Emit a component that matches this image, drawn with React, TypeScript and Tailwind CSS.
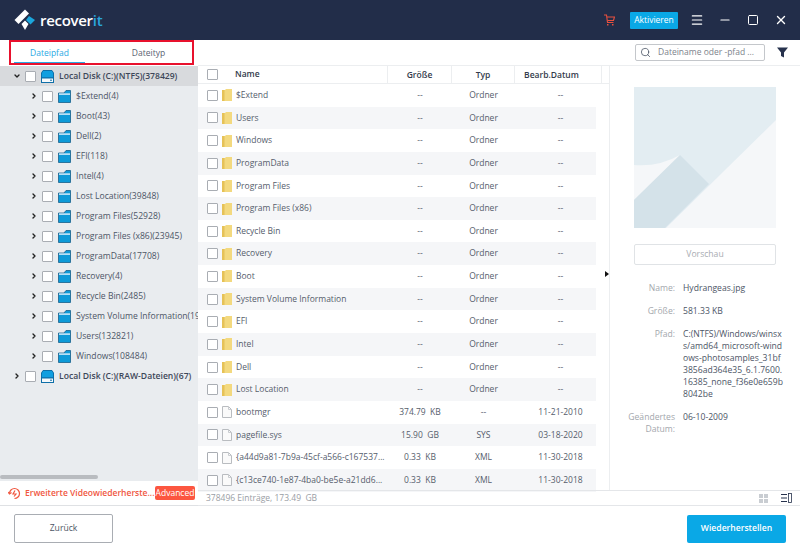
import { ChevronRight, ChevronDown, Search, Menu, Minus, Square, X } from "lucide-react";

const font = "font-['Open_Sans','Noto_Sans',sans-serif]";

const treeItems = [
  "$Extend(4)",
  "Boot(43)",
  "Dell(2)",
  "EFI(118)",
  "Intel(4)",
  "Lost Location(39848)",
  "Program Files(52928)",
  "Program Files (x86)(23945)",
  "ProgramData(17708)",
  "Recovery(4)",
  "Recycle Bin(2485)",
  "System Volume Information(19",
  "Users(132821)",
  "Windows(108484)",
];

const folders = [
  "$Extend",
  "Users",
  "Windows",
  "ProgramData",
  "Program Files",
  "Program Files (x86)",
  "Recycle Bin",
  "Recovery",
  "Boot",
  "System Volume Information",
  "EFI",
  "Intel",
  "Dell",
  "Lost Location",
];

const files = [
  { name: "bootmgr", size: "374.79  KB", type: "--", date: "11-21-2010" },
  { name: "pagefile.sys", size: "15.90  GB", type: "SYS", date: "03-18-2020" },
  { name: "{a44d9a81-7b9a-45cf-a566-c167537...", size: "0.33  KB", type: "XML", date: "11-30-2018" },
  { name: "{c13ce740-1e87-4ba0-be5e-a21dd6...", size: "0.33  KB", type: "XML", date: "11-30-2018" },
];

const pathLines = [
  "C:(NTFS)/Windows/winsx",
  "s/amd64_microsoft-wind",
  "ows-photosamples_31bf",
  "3856ad364e35_6.1.7600.",
  "16385_none_f36e0e659b",
  "8042be",
];

function Box({ className = "" }: { className?: string }) {
  return <span className={`block w-[11px] h-[11px] shrink-0 border border-[#a9adb3] bg-white rounded-[1px] ${className}`} />;
}

function Logo() {
  return (
    <svg width="22" height="22" viewBox="0 0 22 22">
      <path d="M11 0.5 L15 4.5 L4.5 15 L0.5 11 Z" fill="#fff" />
      <path d="M7.5 15 L11 11.5 L14.5 15 L11 21 Z" fill="#fff" />
      <path d="M15 7 L21 11 L16.5 15.5 L12 11 Z" fill="#1ba6dc" />
    </svg>
  );
}

function Cart() {
  return (
    <svg width="11" height="12" viewBox="0 0 11 12" fill="none" stroke="#e8503f" strokeWidth="1.1">
      <path d="M0 1 H2.5 L3.5 8.5 H9.5" />
      <path d="M3 3 H10.5 L9.5 6.5 H3.5" />
      <rect x="3" y="10" width="1.5" height="1.5" fill="#e8503f" stroke="none" />
      <rect x="8" y="10" width="1.5" height="1.5" fill="#e8503f" stroke="none" />
    </svg>
  );
}

function Disk() {
  return (
    <svg width="13" height="13" viewBox="0 0 13 13" className="shrink-0">
      <path d="M2 0.5 H11 L12.5 3 V8 H0.5 V3 Z" fill="#119fe0" stroke="#0f6fa8" />
      <rect x="0.5" y="8" width="12" height="4.5" fill="#f4f8fb" stroke="#0f6fa8" />
      <rect x="9" y="9.7" width="2" height="1" fill="#0f6fa8" />
    </svg>
  );
}

function BlueFolder() {
  return (
    <svg width="13" height="13" viewBox="0 0 13 13" className="shrink-0">
      <path d="M0.5 3 H6 L8 0.5 H12.5 V12.5 H0.5 Z" fill="#0c9ad8" stroke="#16608c" strokeWidth="0.8" />
      <rect x="1" y="3.4" width="11" height="1.4" fill="#dff1fa" />
    </svg>
  );
}

function YellowFolder() {
  return (
    <svg width="10" height="12" viewBox="0 0 10 12" className="shrink-0">
      <path d="M0 1 H3 L4 0 H10 V12 H0 Z" fill="#f3d97f" />
      <rect x="0" y="1" width="2.5" height="11" fill="#e6c257" />
    </svg>
  );
}

function FileIcon() {
  return (
    <svg width="10" height="12" viewBox="0 0 10 12" className="shrink-0">
      <path d="M0.5 0.5 H6.5 L9.5 3.5 V11.5 H0.5 Z" fill="#fafafa" stroke="#b9bcc0" />
      <path d="M6.5 0.5 V3.5 H9.5" fill="none" stroke="#c9ccd0" />
    </svg>
  );
}

function TreeRow({ label }: { label: string }) {
  return (
    <div className="h-5 flex items-center pl-[30px] text-[8.6px] text-[#4c5566] overflow-hidden">
      <ChevronRight size={8} strokeWidth={4} className="text-[#222] shrink-0" />
      <Box className="ml-[4px]" />
      <span className="ml-[5px]"><BlueFolder /></span>
      <span className="ml-[5px] whitespace-nowrap">{label}</span>
    </div>
  );
}

function Row({ name, size, type, date, odd, file }: { name: string; size: string; type: string; date: string; odd: boolean; file?: boolean }) {
  return (
    <div className={`h-[22.65px] flex items-center text-[8.5px] text-[#555d6c] ${odd ? "bg-[#f5f6f8]" : "bg-white"}`}>
      <div className="w-[190px] flex items-center pl-[9px] shrink-0">
        <Box />
        <span className="ml-[4px]">{file ? <FileIcon /> : <YellowFolder />}</span>
        <span className="ml-[4px] whitespace-nowrap">{name}</span>
      </div>
      <div className="w-[64px] text-center whitespace-pre">{size}</div>
      <div className="w-[63px] text-center">{type}</div>
      <div className="w-[81px] text-center pl-[10px]">{date}</div>
    </div>
  );
}

function Info({ label, children }: { label: React.ReactNode; children: React.ReactNode }) {
  return (
    <div className="flex text-[8.6px] leading-[12px] mb-[11px]">
      <div className="w-[53px] text-right text-[#a3a7ad] shrink-0">{label}</div>
      <div className="ml-[8px] text-[#4c5566] whitespace-nowrap">{children}</div>
    </div>
  );
}

export default function App() {
  return (
    <div className={`w-[800px] h-[550px] flex flex-col bg-white overflow-hidden ${font}`}>
      {/* title bar */}
      <div className="h-10 shrink-0 bg-[#222d49] flex items-center pl-[14px]">
        <Logo />
        <span className="ml-[4px] text-white text-[15px] font-semibold tracking-[-0.3px]">
          recover<span className="text-[#2aa5dc]">it</span>
        </span>
        <div className="ml-auto flex items-center">
          <Cart />
          <button className="ml-[15px] w-[48px] h-[17px] bg-[#0aa8e6] rounded-[1px] text-white text-[8.5px]">Aktivieren</button>
          <Menu size={14} strokeWidth={2} className="ml-[12px] text-white" />
          <Minus size={14} strokeWidth={2} className="ml-[14px] text-white" />
          <Square size={12} strokeWidth={2} className="ml-[15px] text-white" />
          <X size={14} strokeWidth={2.4} className="ml-[15px] mr-[12px] text-white" />
        </div>
      </div>

      <div className="flex-1 flex min-h-0">
        {/* left column */}
        <div className="w-[198px] shrink-0 flex flex-col">
          <div className="h-[26px] shrink-0 pl-[9px]">
            <div className="w-[185px] h-[25px] border-2 border-[#e8112d] flex text-[8.5px]">
              <div className="w-[71px] ml-[3px] text-center text-[#2aa9e4] border-b border-[#2aa9e4] leading-[21px]">Dateipfad</div>
              <div className="flex-1 text-center text-[#5a6272] leading-[21px] pl-[20px]">Dateityp</div>
            </div>
          </div>
          <div className="flex-1 bg-[#e9ecef] relative min-h-0">
            <div className="h-[20px] bg-[#d8dadd] flex items-center pl-[13px] text-[8.6px] font-semibold text-[#3d4759]">
              <ChevronDown size={8} strokeWidth={4} className="text-[#222] shrink-0" />
              <Box className="ml-[4px]" />
              <span className="ml-[5px]"><Disk /></span>
              <span className="ml-[5px] whitespace-nowrap">Local Disk (C:)(NTFS)(378429)</span>
            </div>
            {treeItems.map((t) => (
              <TreeRow key={t} label={t} />
            ))}
            <div className="h-5 flex items-center pl-[13px] text-[8.6px] font-semibold text-[#3d4759]">
              <ChevronRight size={8} strokeWidth={4} className="text-[#222] shrink-0" />
              <Box className="ml-[4px]" />
              <span className="ml-[5px]"><Disk /></span>
              <span className="ml-[5px] whitespace-nowrap">Local Disk (C:)(RAW-Dateien)(67)</span>
            </div>
            <div className="absolute left-0 bottom-[2px] w-[98px] h-[4px] bg-[#b9bcc0] rounded-full" />
          </div>
          <div className="h-[25px] shrink-0 flex items-center pl-[8px] border-b border-[#dfe1e4]">
            <svg width="13" height="13" viewBox="0 0 13 13" className="shrink-0" fill="none" stroke="#f0573f" strokeWidth="1.2">
              <path d="M1.5 6.5 A5 5 0 1 1 6.5 11.5" />
              <path d="M0 5 L1.5 7 L3.5 5.5" />
              <path d="M7 3.5 L5 7 H8 L6 9.5" />
            </svg>
            <span className="ml-[4px] w-[130px] text-[8.5px] text-[#f0573f] font-semibold whitespace-nowrap shrink-0">Erweiterte Videowiederherste...</span>
            <span className="w-[40px] h-[14px] shrink-0 bg-[#fc5640] rounded-[2px] text-white text-[8.5px] leading-[14px] text-center">Advanced</span>
          </div>
        </div>

        {/* right column */}
        <div className="flex-1 flex flex-col min-w-0">
          <div className="h-[26px] shrink-0 flex items-center justify-end border-b border-[#eceef0]">
            <div className="w-[130px] h-[17px] border border-[#c4c7cb] rounded-[2px] flex items-center pl-[4px]">
              <Search size={11} strokeWidth={1.6} className="text-[#3d4759]" />
              <span className="ml-[7px] text-[8.5px] text-[#7d838c]">Dateiname oder -pfad ...</span>
            </div>
            <svg width="11" height="11" viewBox="0 0 11 11" className="ml-[12px] mr-[12px]">
              <path d="M0 0.5 H11 L7 5.5 V10.5 L4 9 V5.5 Z" fill="#27324d" />
            </svg>
          </div>
          <div className="flex-1 flex min-h-0">
            {/* file table */}
            <div className="w-[412px] shrink-0 flex flex-col border-r border-[#eceef0]">
              <div className="h-[18px] shrink-0 flex items-center text-[8.5px] font-semibold text-[#333b4b] border-b border-[#eceef0]">
                <div className="w-[190px] flex items-center pl-[9px] border-r border-[#eceef0] h-full shrink-0">
                  <Box />
                  <span className="ml-[17px]">Name</span>
                </div>
                <div className="w-[64px] text-center border-r border-[#eceef0] h-full leading-[17px]">Größe</div>
                <div className="w-[63px] text-center border-r border-[#eceef0] h-full leading-[17px]">Typ</div>
                <div className="w-[87px] text-center border-r border-[#eceef0] h-full leading-[17px] pr-[13px]">Bearb.Datum</div>
              </div>
              <div className="flex-1 min-h-0 pr-[13px]">
                {folders.map((f, i) => (
                  <Row key={f} name={f} size="--" type="Ordner" date="--" odd={i % 2 === 1} />
                ))}
                {files.map((f, i) => (
                  <Row key={f.name} name={f.name} size={f.size} type={f.type} date={f.date} odd={i % 2 === 1} file />
                ))}
              </div>
            </div>
            {/* preview */}
            <div className="flex-1 relative pl-[24px] pt-[21px]">
              <span className="absolute left-[-5px] top-[205px] w-0 h-0 border-y-[3px] border-y-transparent border-l-[4px] border-l-[#111]" />
              <svg width="142" height="141" viewBox="0 0 142 141" className="block">
                <rect width="142" height="141" fill="#e3edf2" />
                <path d="M142 33 V141 H32 Z" fill="#f5f7f9" />
                <path d="M0 78 Q25 80 46 68 L0 113 Z" fill="#f5f7f9" />
                <path d="M46 68 L75 97 L31 141 H0 V113 Z" fill="#d4e2e9" />
              </svg>
              <div className="mt-[16px] w-[142px] h-[21px] border border-[#e0e3e6] rounded-[2px] text-center text-[8.6px] leading-[19px] text-[#a8acb2]">Vorschau</div>
              <div className="mt-[17px] -ml-[12px]">
                <Info label="Name:">Hydrangeas.jpg</Info>
                <Info label="Größe:">581.33  KB</Info>
                <Info label="Pfad:">
                  {pathLines.map((l) => (
                    <div key={l}>{l}</div>
                  ))}
                </Info>
                <Info label={<>Geändertes<br />Datum:</>}>06-10-2009</Info>
              </div>
            </div>
          </div>
          <div className="h-[16px] shrink-0 flex items-center border-y border-[#e4e6e9] text-[8.5px] text-[#9a9ea5] pl-[8px]">
            <span className="whitespace-pre">378496 Einträge, 173.49  GB</span>
            <div className="ml-auto grid grid-cols-2 gap-[1px] mr-[13px]">
              <span className="w-[4px] h-[4px] bg-[#c9cdd2]" />
              <span className="w-[4px] h-[4px] bg-[#c9cdd2]" />
              <span className="w-[4px] h-[4px] bg-[#c9cdd2]" />
              <span className="w-[4px] h-[4px] bg-[#c9cdd2]" />
            </div>
            <svg width="11" height="10" viewBox="0 0 11 10" className="mr-[8px]">
              <path d="M0 1.5 H6 M0 5 H6 M0 8.5 H6" stroke="#27324d" strokeWidth="1.2" />
              <rect x="7.5" y="0.5" width="3" height="9" fill="none" stroke="#27324d" strokeWidth="0.8" />
            </svg>
          </div>
        </div>
      </div>

      {/* footer */}
      <div className="h-[44px] shrink-0 flex items-center justify-between pl-[14px] pr-[14px] pt-[1px]">
        <button className="w-[99px] h-[29px] border border-[#a9adb3] rounded-[2px] text-[8.6px] text-[#4c5566]">Zurück</button>
        <button className="w-[99px] h-[28px] bg-[#0aa8e6] rounded-[2px] text-[8.6px] font-semibold text-white">Wiederherstellen</button>
      </div>
    </div>
  );
}
